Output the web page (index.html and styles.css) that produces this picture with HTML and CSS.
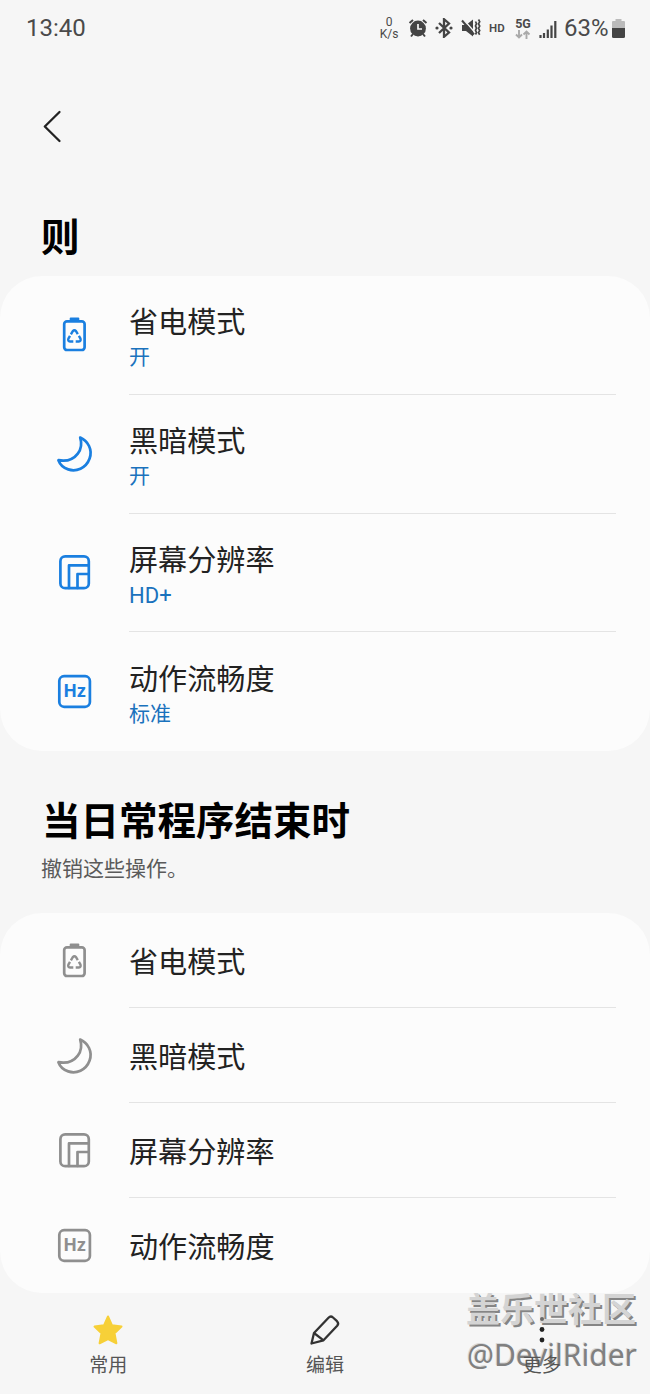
FILE: index.html
```html
<!DOCTYPE html>
<html lang="zh-CN">
  <head>
    <meta charset="UTF-8" />
    <meta name="viewport" content="width=device-width, initial-scale=1.0" />
    <title>日常程序</title>
    <link rel="stylesheet" href="styles.css">
  </head>
  <body>
    <!-- icons used in both lists -->
    <svg class="sprite">
      <symbol id="battery" viewBox="0 0 40 40">
        <rect x="15.7" y="2.6" width="9.6" height="4" rx="1" fill="currentColor" stroke="none" />
        <rect x="10.2" y="6.3" width="20.4" height="28.7" rx="2.8" />
        <g stroke-width="2.4" stroke-linecap="butt">
          <path d="M16.900 19.300l1.900-3.200q1.600-1.700 3.200 0l1.800 3" />
          <path d="M24.900 20.900l1.600 2.800q.7 2.500-1.700 2.800h-3.100" />
          <path d="M19.300 26.500h-3.200q-2.600-.4-1.700-2.800l1.600-2.800" />
        </g>
      </symbol>
      <symbol id="moon" viewBox="0 0 40 40">
        <path d="M26.2 3.6C34 7.2 38.8 15.500 35.600 24.500C32 34.500 22 38 14.200 35.400C9.400 33.800 6 30.500 4.400 26.200C12 27.600 19.300 25.500 23.800 19.600C27.300 15 28 9.500 26.200 3.600Z" />
      </symbol>
      <symbol id="screen" viewBox="0 0 40 40">
        <rect x="6.400" y="3.400" width="28.400" height="31.800" rx="4.800" />
        <path d="M15 35V12.400H34.500M23.500 35V21H34.500" />
      </symbol>
      <symbol id="hz" viewBox="0 0 40 40">
        <rect x="5.300" y="4.200" width="30.600" height="30.600" rx="4.800" />
        <text class="hz" x="20.600" y="25.400" text-anchor="middle">Hz</text>
      </symbol>
    </svg>

    <div class="status">
      <span class="time">13:40</span>
      <div class="speed"><span>0</span><span>K/s</span></div>
      <svg class="alarm" width="20" height="20" viewBox="0 0 20 20">
        <circle cx="10" cy="10.500" r="7.900" fill="#444" />
        <path d="M1.500 5l3.500-3M18.500 5L15 2M5 16l-2 2.500M15 16l2 2.500" stroke="#444" stroke-width="2" />
        <path d="M10 6v5h4" fill="none" stroke="#f6f6f6" stroke-width="1.700" />
      </svg>
      <svg class="bt" width="18" height="20" viewBox="0 0 18 20">
        <path d="M4 5l10 9.500-5 4.300V1.200l5 4.300L4 15" fill="none" stroke="#444" stroke-width="2.300" />
        <circle cx="2" cy="10" r="1.600" fill="#444" />
        <circle cx="16" cy="10" r="1.600" fill="#444" />
      </svg>
      <svg class="mute" width="20" height="20" viewBox="0 0 20 20">
        <path d="M1 7h4l7-5.500v17L5 13H1z" fill="#444" />
        <path d="M2.500 1.500L13.500 14" stroke="#f6f6f6" stroke-width="1.400" />
        <path d="M1 2.500L13 16.500" stroke="#444" stroke-width="2" />
        <path d="M14.500 3.500l1 2.200-1 2.200 1 2.200-1 2.200 1 2.200-1 2M17.500 1.500l1.200 2.200-1.200 2.200 1.200 2.200-1.200 2.200 1.200 2.200-1.200 2.200 1.200 2" fill="none" stroke="#444" stroke-width="1.700" />
      </svg>
      <span class="hd">HD</span>
      <div class="net">
        <span>5G</span>
        <svg width="16" height="9" viewBox="0 0 16 9">
          <path d="M4 0v7.500M1 4.500l3 3 3-3M11.500 9V1.500M8.500 4.500l3-3 3 3" fill="none" stroke="#aaa" stroke-width="1.900" />
        </svg>
      </div>
      <svg class="signal" width="18" height="18" viewBox="0 0 18 18">
        <path d="M1.500 15v3M5 13v5M8.800 9.500V18M12.500 5.500V18M16.300 1v17" stroke="#444" stroke-width="2.200" />
      </svg>
      <span class="percent">63%</span>
      <svg class="level" width="13" height="19" viewBox="0 0 13 19">
        <path d="M3.500 0h6v2H12a1 1 0 0 1 1 1v7H0V3a1 1 0 0 1 1-1h2.500z" fill="#bbb" />
        <path d="M0 9h13v8.500a1.500 1.500 0 0 1-1.500 1.500h-10A1.500 1.500 0 0 1 0 17.500z" fill="#444" />
      </svg>
    </div>

    <div class="back">
      <svg width="20" height="34" viewBox="0 0 20 34">
        <path d="M17.500 2L2.800 16.500l14.700 14.500" />
      </svg>
    </div>

    <h1>则</h1>
    <ul class="card actions">
      <li>
        <svg class="icon"><use href="#battery" /></svg>
        <div class="text"><p>省电模式</p><small>开</small></div>
      </li>
      <li>
        <svg class="icon"><use href="#moon" /></svg>
        <div class="text"><p>黑暗模式</p><small>开</small></div>
      </li>
      <li>
        <svg class="icon"><use href="#screen" /></svg>
        <div class="text"><p>屏幕分辨率</p><small class="latin">HD+</small></div>
      </li>
      <li>
        <svg class="icon"><use href="#hz" /></svg>
        <div class="text"><p>动作流畅度</p><small>标准</small></div>
      </li>
    </ul>

    <div class="ending">
      <h2>当日常程序结束时</h2>
      <p>撤销这些操作。</p>
    </div>
    <ul class="card undo">
      <li>
        <svg class="icon"><use href="#battery" /></svg>
        <div class="text"><p>省电模式</p></div>
      </li>
      <li>
        <svg class="icon"><use href="#moon" /></svg>
        <div class="text"><p>黑暗模式</p></div>
      </li>
      <li>
        <svg class="icon"><use href="#screen" /></svg>
        <div class="text"><p>屏幕分辨率</p></div>
      </li>
      <li>
        <svg class="icon"><use href="#hz" /></svg>
        <div class="text"><p>动作流畅度</p></div>
      </li>
    </ul>

    <div class="nav">
      <div class="tab">
        <svg width="34" height="34" viewBox="0 0 34 34">
          <path d="M17 3.500l4 8.800 9.500 1.300-7 6.700 1.900 10L17 26l-8.400 4.300 1.900-10-7-6.700 9.500-1.300z" fill="#f7d038" stroke="#f7d038" stroke-width="2" stroke-linejoin="round" />
        </svg>
        <span>常用</span>
      </div>
      <div class="tab">
        <svg class="pen" width="34" height="34" viewBox="0 0 34 34">
          <path d="M6 20L20.500 4.700q2.200-2.200 4.500-.2l4 3.700q2.200 2.200.2 4.500L15.500 27.300L3.500 30.500z" />
          <path d="M6 20l9.500 7.300" />
        </svg>
        <span>编辑</span>
      </div>
      <div class="tab">
        <svg width="34" height="34" viewBox="0 0 34 34">
          <g fill="#222">
            <circle cx="17" cy="6" r="2" opacity="0.6" />
            <circle cx="17" cy="16.500" r="2.400" />
            <circle cx="17" cy="27" r="2.400" />
          </g>
        </svg>
        <span>更多</span>
      </div>
    </div>

    <div class="watermark">
      <b>盖乐世社区</b>
      <span>@DevilRider</span>
    </div>
  </body>
</html>
```

FILE: styles.css
```css
* {
  box-sizing: border-box;
  margin: 0;
  padding: 0;
}
body {
  position: relative;
  height: 1394px;
  overflow: hidden;
  background: #f6f6f6;
  color: #222;
  font-family: Roboto, "Noto Sans CJK SC", sans-serif;
}
.sprite {
  display: none;
}
svg {
  display: block;
  flex: none;
}

/* status bar */
.status {
  display: flex;
  align-items: center;
  height: 56px;
  padding: 0 25px 0 26px;
  color: #4a4a4a;
}
.time {
  margin-right: auto;
  font-size: 24px;
}
.speed {
  display: flex;
  flex-direction: column;
  align-items: center;
  width: 20px;
  margin-right: 9px;
  font-size: 12px;
  line-height: 12px;
}
.bt {
  margin-left: 7px;
}
.mute {
  margin-left: 8px;
}
.hd {
  width: 18px;
  margin-left: 8px;
  font-size: 11.5px;
  font-weight: 600;
}
.net {
  display: flex;
  flex-direction: column;
  align-items: center;
  width: 16px;
  margin-left: 8px;
  font-size: 12.5px;
  font-weight: 700;
  line-height: 12px;
}
.signal {
  margin: 2px 0 0 8px;
}
.percent {
  width: 44px;
  margin: 0 4px 0 7px;
  font-size: 24px;
}

.back {
  display: flex;
  align-items: center;
  height: 142px;
  padding-left: 42px;
}
.back path {
  fill: none;
  stroke: #222;
  stroke-width: 2.3;
  stroke-linecap: round;
  stroke-linejoin: round;
}
h1,
h2 {
  color: #000;
  font-size: 38.5px;
  font-weight: 700;
}
h1 {
  height: 78px;
  padding-left: 41px;
  line-height: 79px;
}

/* lists */
.card {
  list-style: none;
  border-radius: 42px;
  background: #fcfcfc;
}
.card li {
  display: flex;
  align-items: center;
  padding: 0 34px 0 54px;
}
.actions li {
  height: 118.75px;
}
.undo li {
  height: 95px;
}
.icon {
  width: 40px;
  height: 40px;
  margin-right: 35px;
  fill: none;
  stroke: currentColor;
  stroke-width: 2.7;
  stroke-linecap: round;
  stroke-linejoin: round;
}
.actions .icon {
  color: #1a7fe0;
}
.undo .icon {
  color: #8f8f8f;
}
.hz {
  fill: currentColor;
  stroke: none;
  font: 700 18px "Open Sans", sans-serif;
}
.text {
  display: flex;
  flex: 1;
  flex-direction: column;
  justify-content: center;
  height: 100%;
  padding-top: 8px;
  border-bottom: 1px solid #e4e4e4;
}
.undo .text {
  padding-top: 6px;
}
li:last-child .text {
  border-bottom-color: transparent;
}
.text p {
  font-size: 29.1px;
  line-height: 38px;
}
.text small {
  color: #1a72bd;
  font-size: 21px;
  line-height: 31px;
}
.text .latin {
  font-size: 22px;
}

.ending {
  height: 162px;
  padding: 43px 0 0 42px;
}
.ending h2 {
  line-height: 56px;
}
.ending p {
  margin-left: -1px;
  color: #5a5a5a;
  font-size: 21px;
  line-height: 38px;
}

/* bottom bar */
.nav {
  display: flex;
  justify-content: space-around;
  padding-top: 20px;
}
.tab {
  display: flex;
  flex: 1;
  flex-direction: column;
  align-items: center;
  color: #555;
  font-size: 19px;
  line-height: 38px;
}
.pen {
  fill: none;
  stroke: #333;
  stroke-width: 2.3;
  stroke-linejoin: round;
}

/* stays behind the bottom bar */
.watermark {
  position: absolute;
  z-index: -1;
  right: 13px;
  bottom: 15px;
  display: flex;
  flex-direction: column;
  align-items: flex-end;
  white-space: nowrap;
}
.watermark b {
  margin-right: 1px;
  color: #d4d4d4;
  font-size: 34px;
  line-height: 42px;
  text-shadow: 2px 2px 0 #858585;
}
.watermark span {
  color: #808080;
  font-family: "Noto Sans", sans-serif;
  font-size: 30px;
  line-height: 48px;
  text-shadow: -1px -1px 0 #d8d8d8;
}
```
